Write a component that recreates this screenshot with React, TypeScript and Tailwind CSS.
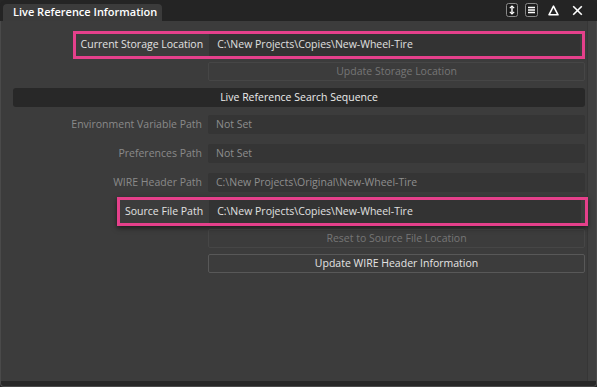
import React from 'react'

const PINK = 'border-[#e5408b]'

function Field({ value, dim }: { value: string; dim?: boolean }) {
  return (
    <div
      className={`flex h-[19px] flex-1 items-center whitespace-nowrap rounded-[2px] bg-[#353535] pl-[8px] ${
        dim ? 'text-[#8e8e8e]' : 'text-[#dedede]'
      }`}
    >
      {value}
    </div>
  )
}

function Row({ label, value, className = '' }: { label: string; value: string; className?: string }) {
  return (
    <div className={`flex items-center gap-[6px] ${className}`}>
      <div className="w-[189px] whitespace-nowrap text-right text-[#8a8a8a]">{label}</div>
      <Field value={value} dim />
    </div>
  )
}

function Button({ label, disabled, className = '' }: { label: string; disabled?: boolean; className?: string }) {
  return (
    <div className={`flex ${className}`}>
      <div className="w-[195px]" />
      <div
        className={`flex h-[19px] flex-1 items-center justify-center whitespace-nowrap rounded-[2px] border ${
          disabled ? 'border-[#464646] text-[#767676]' : 'border-[#585858] text-[#e4e4e4]'
        }`}
      >
        {label}
      </div>
    </div>
  )
}

function Icons() {
  return (
    <div className="flex items-center gap-[7px] pr-[14px] pb-[1px]">
      <svg width="12" height="14" viewBox="0 0 12 14">
        <rect x="0.5" y="0.5" width="11" height="13" rx="2" fill="#1c1c1c" stroke="#8a8a8a" />
        <path d="M6 3v8" stroke="#fff" strokeWidth="1.4" />
        <path d="M3.8 5.2L6 3l2.2 2.2M3.8 8.8L6 11l2.2-2.2" stroke="#fff" strokeWidth="1.2" fill="none" />
      </svg>
      <svg width="13" height="14" viewBox="0 0 13 14">
        <rect x="0.5" y="0.5" width="12" height="13" rx="2" fill="#1c1c1c" stroke="#8a8a8a" />
        <path d="M3 4.5h7M3 7h7M3 9.5h7" stroke="#fff" strokeWidth="1.3" />
      </svg>
      <svg width="11" height="11" viewBox="0 0 11 11" className="ml-[3px]">
        <path d="M5.5 1.2L10 9.8H1z" stroke="#fff" strokeWidth="1.6" fill="none" strokeLinejoin="round" />
      </svg>
      <svg width="11" height="11" viewBox="0 0 11 11" className="ml-[6px]">
        <path d="M1.2 1.2l8.6 8.6M9.8 1.2L1.2 9.8" stroke="#fff" strokeWidth="1.6" />
      </svg>
    </div>
  )
}

export default function App() {
  return (
    <div className="h-[387px] w-[597px] bg-[#262626] font-['Open_Sans','Noto_Sans',sans-serif] text-[10.5px]">
      <div className="flex h-full flex-col">
        {/* tab strip */}
        <div className="flex h-[21px] items-end justify-between rounded-t-[6px] bg-[#242424] pl-[3px]">
          <div className="flex h-[17px] w-[159px] items-center whitespace-nowrap rounded-t-[4px] bg-[#3b3b3b] pl-[10px] text-[11px] font-semibold text-white">
            Live Reference Information
          </div>
          <div className="flex h-full items-center">
            <Icons />
          </div>
        </div>

        {/* body */}
        <div className="flex flex-1 border-x border-[#4a4a4a] bg-[#3c3c3c]">
          <div className="flex flex-1 flex-col pl-[12px] pr-[2px]">
            <div className={`mt-[10px] ml-[60px] flex h-[28px] items-center gap-[6px] border-[3px] ${PINK} pl-[4px] pr-[2px]`}>
              <div className="flex-1 whitespace-nowrap text-right text-[#e2e2e2]">Current Storage Location</div>
              <div className="flex h-full w-[371px] items-center whitespace-nowrap bg-[#333333] pl-[8px] text-[#e0e0e0]">
                C:\New Projects\Copies\New-Wheel-Tire
              </div>
            </div>

            <Button label="Update Storage Location" disabled className="mt-[3px]" />

            <div className="mt-[7px] flex h-[19px] items-center justify-center rounded-[3px] bg-[#282828] text-[#ececec]">
              Live Reference Search Sequence
            </div>

            <Row label="Environment Variable Path" value="Not Set" className="mt-[8px]" />
            <Row label="Preferences Path" value="Not Set" className="mt-[10px]" />
            <Row
              label="WIRE Header Path"
              value="C:\New Projects\Original\New-Wheel-Tire"
              className="mt-[10px]"
            />

            <div
              className={`relative mt-[5px] ml-[104px] mr-[-3px] flex h-[29px] items-center gap-[6px] border-[3px] ${PINK} bg-[#3c3c3c] pl-[5px] pr-[4px] shadow-[0_2px_5px_rgba(0,0,0,0.55)]`}
            >
              <div className="flex-1 whitespace-nowrap text-right text-[#e2e2e2]">Source File Path</div>
              <div className="flex h-full w-[372px] items-center whitespace-nowrap bg-[#333333] pl-[8px] text-[#e0e0e0]">
                C:\New Projects\Copies\New-Wheel-Tire
              </div>
            </div>

            <Button label="Reset to Source File Location" disabled className="mt-[3px]" />
            <Button label="Update WIRE Header Information" className="mt-[6px]" />
          </div>
          <div className="w-[9px] border-l border-[#363636] bg-[#404040]" />
        </div>

        {/* bottom edge */}
        <div className="h-[6px] rounded-b-[4px] border-x border-b border-[#4a4a4a] bg-[#272727]" />
      </div>
    </div>
  )
}
